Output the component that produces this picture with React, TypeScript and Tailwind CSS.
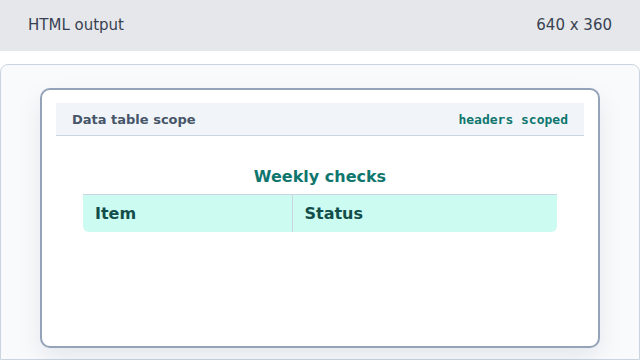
export default function App() {
  return (
    <div className="flex h-[360px] w-[640px] flex-col overflow-hidden bg-white font-['DejaVu_Sans',sans-serif]">
      <div className="flex h-[51px] shrink-0 items-center justify-between bg-[#e5e7eb] px-7 text-[15px] text-[#374151]">
        <span>HTML output</span>
        <span>640 x 360</span>
      </div>

      <div className="mt-[13px] flex-1 rounded-t-lg border border-[#cbd5e1] bg-[#f8fafc] px-[39px] pt-[23px]">
        <div className="h-[260px] w-[560px] rounded-[10px] border-2 border-[#94a3b8] bg-white px-[14px] pt-[13px] shadow-[0_10px_25px_rgba(15,23,42,0.08)]">
          <div className="flex h-[33px] items-center justify-between border-b border-[#cbd5e1] bg-[#f1f5f9] px-4 pt-px">
            <span className="text-[13px] font-bold text-[#475569]">Data table scope</span>
            <span className="font-['DejaVu_Sans_Mono',monospace] text-[13px] font-bold text-[#0f766e]">
              headers scoped
            </span>
          </div>

          <table className="mx-auto mt-[29px] w-[474px] border-collapse">
            <caption className="pb-[5px] text-[16px] font-bold leading-6 text-[#0f766e]">
              Weekly checks
            </caption>
            <thead>
              <tr className="border-t border-[#cbd5e1] bg-[#ccfbf1] text-left text-[16px] text-[#134e4a]">
                <th scope="col" className="w-[209px] rounded-bl-md border-r border-[#cbd5e1] px-3 pt-[7px] pb-[6px] font-bold">
                  Item
                </th>
                <th scope="col" className="rounded-br-md px-3 pt-[7px] pb-[6px] font-bold">
                  Status
                </th>
              </tr>
            </thead>
          </table>
        </div>
      </div>
    </div>
  )
}
